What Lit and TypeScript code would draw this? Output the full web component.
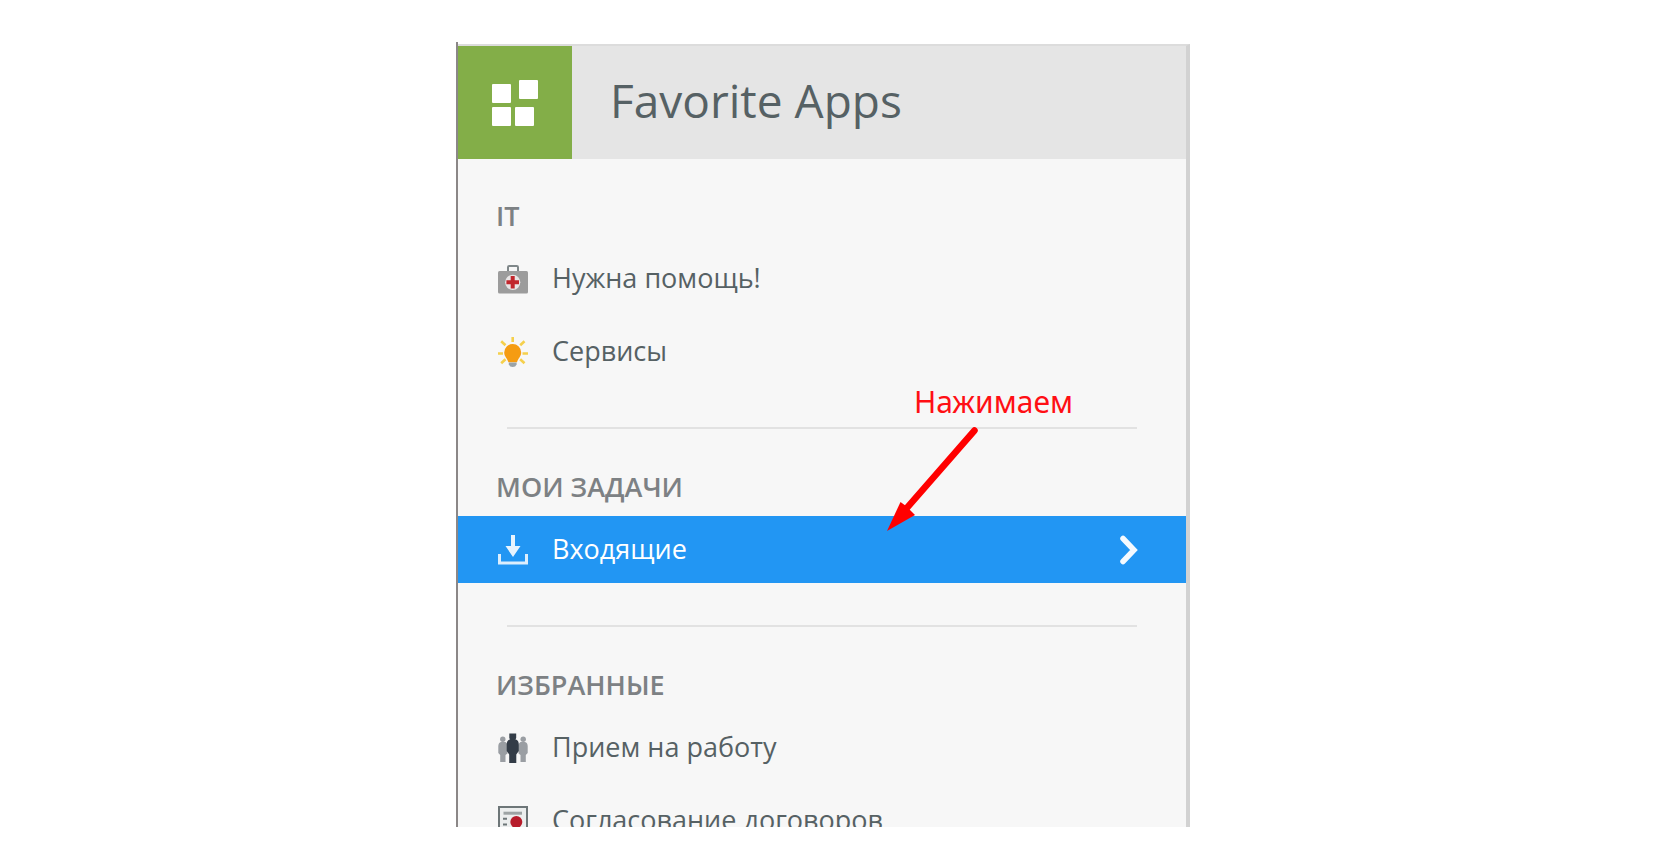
import { LitElement, html, css, svg, TemplateResult } from "lit";
import { customElement, property } from "lit/decorators.js";

type IconName = "medkit" | "bulb" | "inbox" | "people" | "contract";

interface AppItem {
  label: string;
  icon: IconName;
  active?: boolean;
}

interface AppGroup {
  title: string;
  items: AppItem[];
}

const GROUPS: AppGroup[] = [
  {
    title: "IT",
    items: [
      { label: "Нужна помощь!", icon: "medkit" },
      { label: "Сервисы", icon: "bulb" },
    ],
  },
  {
    title: "МОИ ЗАДАЧИ",
    items: [{ label: "Входящие", icon: "inbox", active: true }],
  },
  {
    title: "ИЗБРАННЫЕ",
    items: [
      { label: "Прием на работу", icon: "people" },
      { label: "Согласование договоров", icon: "contract" },
    ],
  },
];

const ICONS: Record<IconName, TemplateResult> = {
  medkit: svg`
    <path d="M10 7V3.2Q10 2 11.2 2H18.8Q20 2 20 3.2V7" fill="none" stroke="#7f8789" stroke-width="2"/>
    <rect x="0" y="7" width="30" height="22.5" rx="1.5" fill="#9c9c9c"/>
    <circle cx="14.7" cy="18.3" r="7.6" fill="#e9e6e6"/>
    <path d="M12.7 12h4v4.300h4.300v4h-4.300v4.300h-4v-4.300H8.400v-4h4.300z" fill="#c1272d"/>`,
  bulb: svg`
    <path d="M14.700 0v5M0 16.500h5M24.500 16.500H30M3.200 4.200l4.300 4M26.500 4.200l-4.300 4M3.200 26.300l4.300-4M26.500 26.300l-4.300-4" stroke="#f5d04c" stroke-width="2.600" fill="none"/>
    <path d="M14.700 7a8.500 8.500 0 0 1 8.500 8.500c0 4-3.200 6-4.200 9.700h-8.600c-1-3.700-4.200-5.700-4.200-9.700a8.500 8.500 0 0 1 8.500-8.500z" fill="#f59c12"/>
    <path d="M10.800 25.500h7.800v2q-1 2.500-3.900 2.500t-3.900-2.500z" fill="#9aa3a8"/>`,
  inbox: svg`
    <path d="M1.500 19v9h27v-9" fill="none" stroke="#dceefd" stroke-width="3"/>
    <path d="M13 0h4v11h5.500L15 22 7.500 11H13z" fill="#e8f4fe"/>`,
  people: svg`
    <g fill="#9a9ea3">
      <circle cx="4.800" cy="6.300" r="2.700"/>
      <path d="M3 9h4.500q2 1 2 3.500v8L7.500 22v7H2.200v-7L0.300 20v-7Q0.500 9.500 3 9z"/>
      <circle cx="25.200" cy="6.300" r="2.700"/>
      <path d="M22.500 9H27q2.500.5 2.700 4v7l-1.900 2v7h-5.300v-7l-2-1.500v-8q0-2.500 2-3.500z"/>
    </g>
    <path d="M11.300 0.500h6.900v4.500l-1 2.300h-4.900l-1-2.300z" fill="#333c47"/>
    <path d="M11.500 6.500h6.500q2.800 1 2.800 5v6.500l-2.500 3.500v8.500h-7.100v-8.500l-2.500-3.500v-6.500q0-4 2.800-5z" fill="#333c47"/>`,
  contract: svg`
    <rect x="1" y="1" width="28" height="28" fill="#eceeee" stroke="#6d7678" stroke-width="2"/>
    <path d="M5.500 7.200h18.500" stroke="#9da3a4" stroke-width="3"/>
    <path d="M5 12.800h4M5 18.500h4M5 24h4" stroke="#6d7678" stroke-width="2"/>
    <circle cx="18.300" cy="16" r="6" fill="#b71c2b"/>
    <path d="M14.500 21v6l3.800-2 3.800 2v-6z" fill="#b71c2b"/>`,
};

@customElement("app-icon")
export class AppIcon extends LitElement {
  @property() name: IconName = "medkit";

  static styles = css`
    :host {
      display: block;
      width: 30px;
      height: 30px;
    }
    .glyph {
      display: block;
      width: 100%;
      height: 100%;
    }
  `;

  render() {
    return html`<svg class="glyph" viewBox="0 0 30 30" aria-hidden="true">${ICONS[this.name]}</svg>`;
  }
}

@customElement("app-root")
export class AppRoot extends LitElement {
  static styles = css`
    :host {
      display: grid;
      grid-template-columns: 456fr 734fr 480fr;
      box-sizing: border-box;
      height: 100vh;
      padding: 42px 0 36px;
      background: #fff;
      font-family: "Open Sans", "Noto Sans", sans-serif;
      color: #566164;
    }
    .frame {
      grid-column: 2;
      min-height: 0;
      box-sizing: border-box;
      border-left: 2px solid #8b8787;
      padding-top: 2px;
      overflow: hidden;
    }
    .panel {
      position: relative;
      min-height: 100%;
      box-sizing: border-box;
      border-top: 2px solid #dcdcdc;
      border-right: 4px solid #d2d2d2;
      background: #f7f7f7;
    }
    .header {
      display: flex;
      align-items: center;
      height: 113px;
      background: #e5e5e5;
    }
    .tile {
      display: grid;
      place-items: center;
      width: 114px;
      height: 113px;
      padding: 0;
      border: 0;
      background: #83ae48;
    }
    .tile-glyph {
      width: 46px;
      height: 46px;
    }
    .heading {
      margin: 0 0 6px 38px;
      font-size: 46px;
      line-height: 60px;
      font-weight: 400;
    }
    .groups {
      padding-top: 28px;
    }
    .group + .group {
      margin-top: 42px;
    }
    .group + .group::before {
      content: "";
      display: block;
      height: 2px;
      margin: 0 49px 29px;
      background: #e2e2e2;
    }
    .title {
      margin: 0;
      padding-left: 38px;
      font-size: 27px;
      line-height: 58px;
      font-weight: 600;
      color: #7d8184;
    }
    .list {
      display: grid;
      gap: 6px;
      margin: 0;
      padding: 0;
      list-style: none;
    }
    .item {
      display: flex;
      align-items: center;
      gap: 24px;
      height: 67px;
      padding: 0 48px 0 40px;
      font-size: 27px;
      color: inherit;
      text-decoration: none;
      white-space: nowrap;
    }
    .item.active {
      background: #2296f3;
      color: #fff;
    }
    .label {
      flex: 1;
      padding-bottom: 2px;
    }
    .chevron {
      width: 18px;
      height: 30px;
    }
    .note {
      position: absolute;
      top: 336px;
      right: 113px;
      margin: 0;
      color: #ff0f14;
      font-family: "Noto Sans", sans-serif;
      font-size: 30px;
      line-height: 40px;
      pointer-events: none;
    }
    .arrow {
      position: absolute;
      top: 45px;
      right: 95px;
      width: 92px;
      height: 106px;
    }
  `;

  private renderItem(item: AppItem) {
    return html`
      <li>
        <a class="item ${item.active ? "active" : ""}" href="#">
          <app-icon name=${item.icon}></app-icon>
          <span class="label">${item.label}</span>
          ${item.active
            ? html`<svg class="chevron" viewBox="0 0 18 30" aria-hidden="true">
                <path d="M3 3.500L14 15L3 26.500" fill="none" stroke="#f4faff" stroke-width="5.500" stroke-linecap="round" stroke-linejoin="miter"/>
              </svg>`
            : ""}
        </a>
      </li>
    `;
  }

  render() {
    return html`
      <div class="frame">
        <nav class="panel" aria-label="Favorite Apps">
          <header class="header">
            <button class="tile" type="button" aria-label="Apps">
              <svg class="tile-glyph" viewBox="0 0 46 46" fill="#fff" aria-hidden="true">
                <rect x="0" y="4" width="19" height="19" rx="1"/>
                <rect x="27" y="0" width="19" height="19" rx="1"/>
                <rect x="0" y="27" width="19" height="19" rx="1"/>
                <rect x="23" y="27" width="19" height="19" rx="1"/>
              </svg>
            </button>
            <h1 class="heading">Favorite Apps</h1>
          </header>
          <div class="groups">
            ${GROUPS.map(
              (group) => html`
                <section class="group">
                  <h2 class="title">${group.title}</h2>
                  <ul class="list">${group.items.map((item) => this.renderItem(item))}</ul>
                </section>
              `
            )}
          </div>
          <p class="note">
            Нажимаем
            <svg class="arrow" viewBox="0 0 92 106" aria-hidden="true">
              <path d="M88.500 3.500L20 82" stroke="#ff0000" stroke-width="6.500" stroke-linecap="round"/>
              <path d="M1 104L14.500 75L20 79L29 88Z" fill="#ff0000"/>
            </svg>
          </p>
        </nav>
      </div>
    `;
  }
}
